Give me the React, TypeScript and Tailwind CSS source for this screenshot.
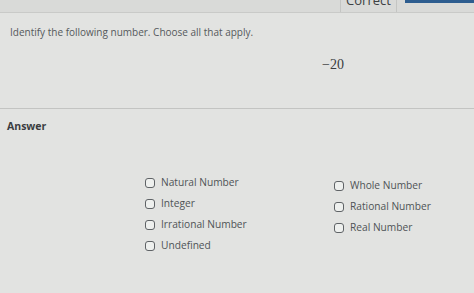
export default function App() {
  const left = ["Natural Number", "Integer", "Irrational Number", "Undefined"];
  const right = ["Whole Number", "Rational Number", "Real Number"];

  const Option = ({ label }: { label: string }) => (
    <label className="flex h-[21px] items-center gap-[6px]">
      <span className="h-[10px] w-[10px] rounded-[3px] border-[1.5px] border-[#5f6366] bg-[#eef0ee]" />
      <span className="text-[10.2px] text-[#4f5356]">{label}</span>
    </label>
  );

  return (
    <div
      className="h-[293px] w-[474px] overflow-hidden bg-[#e2e3e1]"
      style={{ fontFamily: '"Open Sans", "Noto Sans", sans-serif' }}
    >
      <div className="flex h-[13px] justify-end border-b border-[#c9cac8] bg-[#d9dad8]">
        <div className="flex w-[57px] justify-center overflow-hidden border-x border-[#c4c5c3]">
          <span className="-mt-[9px] text-[13px] leading-[18px] text-[#3e4144]">Correct</span>
        </div>
        <div className="ml-[8px] h-[3px] w-[69px] bg-[#2d5d8f]" />
      </div>

      <section className="border-b border-[#c3c4c2] pb-[35px]">
        <p className="px-[10px] pt-[12px] text-[10px] leading-[14px] text-[#55595c]">
          Identify the following number. Choose all that apply.
        </p>
        <p
          className="mt-[18px] pl-[322px] text-[14px] leading-[16px] text-[#3a3c3e]"
          style={{ fontFamily: '"Liberation Serif", serif' }}
        >
          −20
        </p>
      </section>

      <p className="px-[7px] pt-[10px] text-[10.5px] font-bold leading-[14px] text-[#3a3d40]">Answer</p>

      <div className="mt-[39px] flex">
        <div className="ml-[145px] flex w-[189px] flex-col">
          {left.map((l) => (
            <Option key={l} label={l} />
          ))}
        </div>
        <div className="mt-[3px] flex flex-col">
          {right.map((l) => (
            <Option key={l} label={l} />
          ))}
        </div>
      </div>
    </div>
  );
}
